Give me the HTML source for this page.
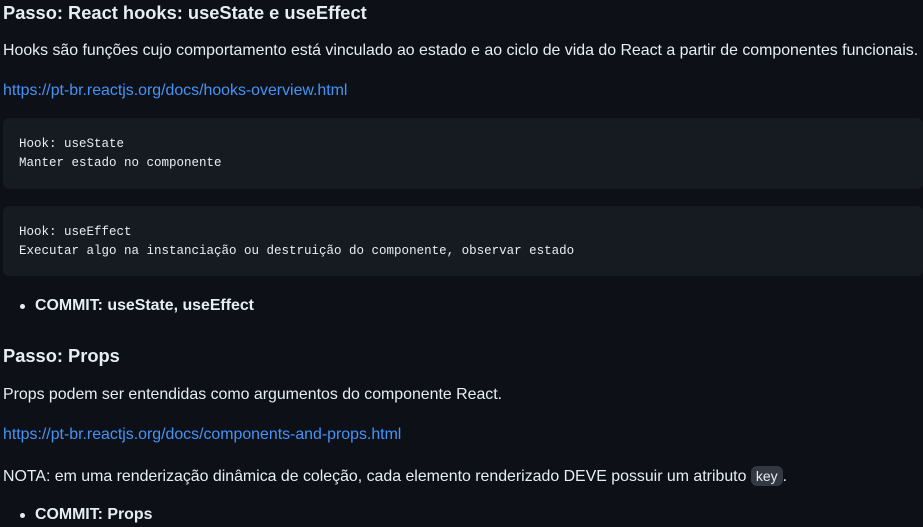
<!DOCTYPE html>
<html><head><meta charset="utf-8"><style>
html,body{margin:0;padding:0;background:#0d1117;width:923px;height:527px;overflow:hidden}
body{font-family:"Liberation Sans",sans-serif;color:#e6edf3;font-size:15.9px;position:relative}
.a{position:absolute;left:3px;white-space:nowrap;line-height:20px}
h2{position:absolute;left:3px;margin:0;font-size:18.3px;font-weight:bold;line-height:24px;white-space:nowrap}
a{color:#4493f8;text-decoration:none}
.pre{position:absolute;left:3px;right:0;background:#161b22;border-radius:6px;font-family:"Liberation Mono",monospace;font-size:12.5px;line-height:19px;padding:17px 16px;box-sizing:border-box;white-space:pre}
code{font-family:"Liberation Sans",sans-serif;font-size:14px;background:#343941;border-radius:6px;padding:2px 5px}
.li{position:absolute;left:35px;font-weight:bold;line-height:20px;white-space:nowrap}
.li:before{content:"";position:absolute;left:-15px;top:8px;width:5px;height:5px;border-radius:50%;background:#e6edf3}
</style></head><body>
<h2 style="top:1px">Passo: React hooks: useState e useEffect</h2>
<div class="a" style="top:41px">Hooks são funções cujo comportamento está vinculado ao estado e ao ciclo de vida do React a partir de componentes funcionais.</div>
<div class="a" style="top:81px"><a>https://pt-br.reactjs.org/docs/hooks-overview.html</a></div>
<div class="pre" style="top:118px;height:71px">Hook: useState
Manter estado no componente</div>
<div class="pre" style="top:206px;height:70px">Hook: useEffect
Executar algo na instanciação ou destruição do componente, observar estado</div>
<div class="li" style="top:296px">COMMIT: useState, useEffect</div>
<h2 style="top:344px">Passo: Props</h2>
<div class="a" style="top:385px">Props podem ser entendidas como argumentos do componente React.</div>
<div class="a" style="top:425px"><a>https://pt-br.reactjs.org/docs/components-and-props.html</a></div>
<div class="a" style="top:466px">NOTA: em uma renderização dinâmica de coleção, cada elemento renderizado DEVE possuir um atributo <code>key</code>.</div>
<div class="li" style="top:505px">COMMIT: Props</div>
</body></html>
